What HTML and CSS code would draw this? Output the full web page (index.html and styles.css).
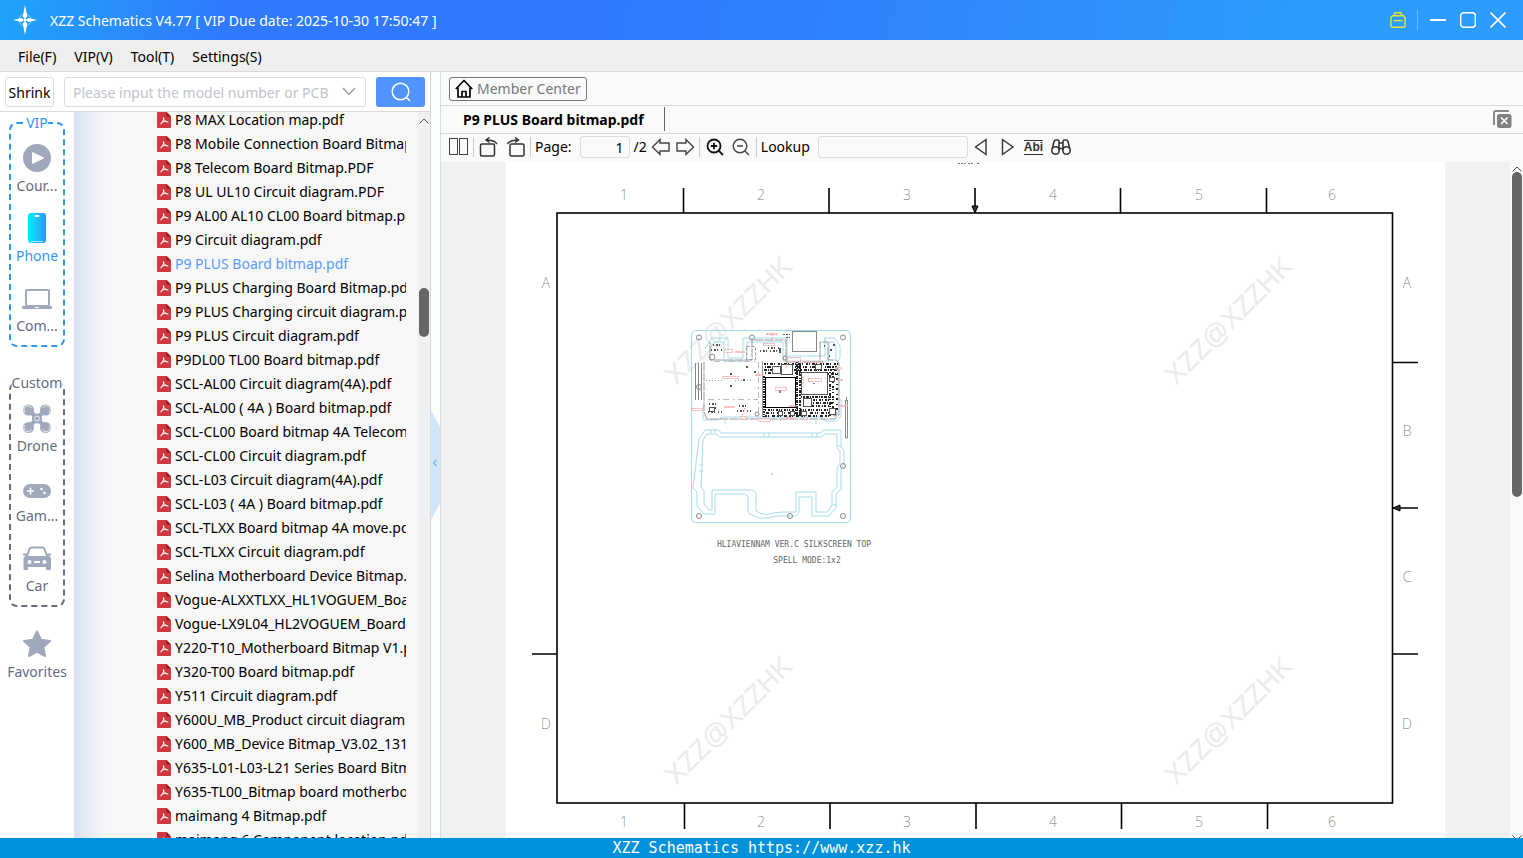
FILE: index.html
```html
<!DOCTYPE html>
<html lang="en">

<head>
    <meta charset="UTF-8">
    <meta name="viewport" content="width=device-width, initial-scale=1.0">
    <title>XZZ Schematics</title>
    <link rel="stylesheet" href="styles.css">
</head>

<body>

    <!-- shared icons -->
    <svg class="sprite" aria-hidden="true">
        <symbol id="pdf" viewBox="0 0 14 16">
            <path d="M1 0h8.500l4.500 4.500V15a1 1 0 0 1-1 1H1a1 1 0 0 1-1-1V1a1 1 0 0 1 1-1z" fill="#d0393f" />
            <path d="M9.500 0L14 4.500H9.500z" fill="#8f1218" />
            <path d="M6.300 5.500c1.300 0 .3 3-2.300 6.500M6.500 6.500c.6 2 2 3.300 4.500 3.700M4 11c2-1.500 4-2 6-1.600" fill="none" stroke="#fff" stroke-width="1" stroke-linecap="round" />
        </symbol>
    </svg>

    <header class="titlebar">
        <svg class="logo" width="24" height="30" viewBox="0 0 24 30">
            <circle cx="12" cy="15" r="6" fill="none" stroke="#8fd0ff" stroke-width="1" />
            <path d="M12 0l2.300 11.500L12 14l-2.300-2.500zM12 30l2.300-11.500L12 16l-2.300 2.500zM0 15l8.500-2 2.500 2-2.500 2zM24 15l-8.500-2-2.500 2 2.500 2z" fill="#fff" />
            <circle cx="12" cy="15" r="1.500" fill="#fff" />
        </svg>
        <h1>XZZ Schematics V4.77 [ VIP Due date: 2025-10-30 17:50:47 ]</h1>
        <div class="window-buttons">
            <button class="vip-case" aria-label="VIP">
                <svg width="16" height="16" viewBox="0 0 16 16" fill="none" stroke="#e8e23c" stroke-width="1.400">
                    <path d="M4.500 3.500V2a1.200 1.200 0 0 1 1.200-1.200h4.600A1.200 1.200 0 0 1 11.500 2v1.500" />
                    <path d="M2.500 3.700h11l1.600 2v7.800a1.800 1.800 0 0 1-1.800 1.800H2.700A1.800 1.800 0 0 1 .9 13.500V5.700z" stroke-linejoin="round" />
                    <path d="M3.500 8.600h9" />
                </svg>
            </button>
            <span class="divider"></span>
            <button aria-label="Minimize"><svg width="16" height="16" viewBox="0 0 16 16"><path d="M0 8h16" stroke="#fff" stroke-width="2" /></svg></button>
            <button aria-label="Maximize"><svg width="16" height="16" viewBox="0 0 16 16"><rect x=".7" y=".7" width="14.600" height="14.600" rx="3" fill="none" stroke="#fff" stroke-width="1.400" /></svg></button>
            <button aria-label="Close"><svg width="16" height="16" viewBox="0 0 16 16"><path d="M.5.5l15 15M15.500.5l-15 15" stroke="#fff" stroke-width="1.600" /></svg></button>
        </div>
    </header>

    <nav class="menubar">
        <button>File(F)</button>
        <button>VIP(V)</button>
        <button>Tool(T)</button>
        <button>Settings(S)</button>
    </nav>

    <main class="workspace">

        <section class="left-panel">
            <form class="search">
                <button type="button" class="shrink">Shrink</button>
                <div class="search-box">
                    <input type="text" aria-label="Model number or PCB" placeholder="Please input the model number or PCB">
                    <svg width="14" height="9" viewBox="0 0 14 9"><path d="M1 1l6 6.500L13 1" fill="none" stroke="#9a9fa8" stroke-width="1.500" /></svg>
                </div>
                <button type="button" class="search-button" aria-label="Search">
                    <svg width="20" height="20" viewBox="0 0 20 20" fill="none" stroke="#fff" stroke-width="1.500" stroke-linecap="round"><circle cx="9.500" cy="9.500" r="8.300" /><path d="M15.500 15.500l3 3" /></svg>
                </button>
            </form>

            <div class="browser">
                <aside class="sidebar">
                    <div class="group group-vip">
                        <h2>VIP</h2>
                        <button class="item">
                            <svg width="30" height="30" viewBox="0 0 30 30"><circle cx="15" cy="15" r="14" fill="#a0a8bc" /><path d="M10.500 9.500v11l11-5.500z" fill="#fff" stroke="#fff" stroke-linejoin="round" /></svg>
                            <span>Cour...</span>
                        </button>
                        <button class="item active">
                            <svg width="30" height="30" viewBox="0 0 30 30">
                                <defs><linearGradient id="phone"><stop offset="0" stop-color="#00f0ff" /><stop offset="1" stop-color="#2f96f6" /></linearGradient></defs>
                                <rect x="6" y="0" width="18" height="30" rx="3" fill="url(#phone)" />
                                <rect x="12.500" y="2" width="5" height="2" rx="1" fill="#fff" /><path d="M9 28.500h12" stroke="#9fe0ff" />
                            </svg>
                            <span>Phone</span>
                        </button>
                        <button class="item">
                            <svg width="30" height="30" viewBox="0 0 30 30"><rect x="4" y="7" width="23" height="16" rx="1" fill="none" stroke="#a0a8bc" stroke-width="2" /><path d="M0 23h30v1.500a1.500 1.500 0 0 1-1.500 1.500h-27A1.500 1.500 0 0 1 0 24.500z" fill="#a0a8bc" /><path d="M13 24.500h4" stroke="#fff" /></svg>
                            <span>Com...</span>
                        </button>
                    </div>

                    <div class="group group-custom">
                        <h2>Custom</h2>
                        <button class="item">
                            <svg width="30" height="30" viewBox="0 0 30 30">
                                <path d="M6 6l18 19M24 6L6 25" stroke="#a0a8bc" stroke-width="4" />
                                <g fill="#a0a8bc"><circle cx="6.500" cy="7" r="5.500" /><circle cx="23.500" cy="7" r="5.500" /><circle cx="6.500" cy="24.500" r="5.500" /><circle cx="23.500" cy="24.500" r="5.500" /><circle cx="15" cy="15.500" r="5" /></g>
                                <g fill="none" stroke="#fff" stroke-width=".8"><path d="M3 9.500A4 4 0 1 1 9.500 5M20.500 5A4 4 0 1 1 27 9.500M3 22a4 4 0 1 0 6.500 4.500M20.500 26.500A4 4 0 1 0 27 22" /><circle cx="15" cy="15.500" r="2.500" /></g>
                            </svg>
                            <span>Drone</span>
                        </button>
                        <button class="item">
                            <svg width="30" height="30" viewBox="0 0 30 30"><rect x="1" y="11" width="28" height="14" rx="7" fill="#a0a8bc" /><path d="M5 18h7M8.500 14.500v7" stroke="#fff" stroke-width="1.600" /><circle cx="19.500" cy="16" r="1.300" fill="#fff" /><circle cx="22.500" cy="20" r="1.300" fill="#fff" /></svg>
                            <span>Gam...</span>
                        </button>
                        <button class="item">
                            <svg width="30" height="30" viewBox="0 0 30 30"><path d="M5 13l2.500-7q.6-1.500 2-1.500h11q1.400 0 2 1.500l2.500 7" fill="none" stroke="#a0a8bc" stroke-width="2" /><path d="M1 10.500h4v2.500h20v-2.500h4v2h-2q2 2 2 4V26a1 1 0 0 1-1 1h-3a1 1 0 0 1-1-1v-2H6v2a1 1 0 0 1-1 1H2.500a1 1 0 0 1-1-1v-9.500q0-2 2-4H1z" fill="#a0a8bc" /><circle cx="7.500" cy="19" r="2" fill="#fff" /><circle cx="22.500" cy="19" r="2" fill="#fff" /><path d="M12 19h6" stroke="#fff" stroke-width="2" /></svg>
                            <span>Car</span>
                        </button>
                    </div>

                    <button class="item favorites">
                        <svg width="30" height="30" viewBox="0 0 30 30"><path d="M15 2.500l4 8.200 9 1.200-6.600 6.200L23 27l-8-4.300L7 27l1.600-8.900L2 11.900l9-1.200z" fill="#a0a8bc" stroke="#a0a8bc" stroke-width="2" stroke-linejoin="round" /></svg>
                        <span>Favorites</span>
                    </button>
                </aside>

                <div class="tree">
                    <ul class="files">
                        <li><a href="#"><svg><use href="#pdf" /></svg>P8 MAX Location map.pdf</a></li>
                        <li><a href="#"><svg><use href="#pdf" /></svg>P8 Mobile Connection Board Bitmap.pdf</a></li>
                        <li><a href="#"><svg><use href="#pdf" /></svg>P8 Telecom Board Bitmap.PDF</a></li>
                        <li><a href="#"><svg><use href="#pdf" /></svg>P8 UL UL10 Circuit diagram.PDF</a></li>
                        <li><a href="#"><svg><use href="#pdf" /></svg>P9 AL00 AL10 CL00 Board bitmap.pdf</a></li>
                        <li><a href="#"><svg><use href="#pdf" /></svg>P9 Circuit diagram.pdf</a></li>
                        <li><a href="#" class="selected"><svg><use href="#pdf" /></svg>P9 PLUS Board bitmap.pdf</a></li>
                        <li><a href="#"><svg><use href="#pdf" /></svg>P9 PLUS Charging Board Bitmap.pdf</a></li>
                        <li><a href="#"><svg><use href="#pdf" /></svg>P9 PLUS Charging circuit diagram.pdf</a></li>
                        <li><a href="#"><svg><use href="#pdf" /></svg>P9 PLUS Circuit diagram.pdf</a></li>
                        <li><a href="#"><svg><use href="#pdf" /></svg>P9DL00 TL00 Board bitmap.pdf</a></li>
                        <li><a href="#"><svg><use href="#pdf" /></svg>SCL-AL00 Circuit diagram(4A).pdf</a></li>
                        <li><a href="#"><svg><use href="#pdf" /></svg>SCL-AL00 ( 4A ) Board bitmap.pdf</a></li>
                        <li><a href="#"><svg><use href="#pdf" /></svg>SCL-CL00 Board bitmap 4A Telecom.pdf</a></li>
                        <li><a href="#"><svg><use href="#pdf" /></svg>SCL-CL00 Circuit diagram.pdf</a></li>
                        <li><a href="#"><svg><use href="#pdf" /></svg>SCL-L03 Circuit diagram(4A).pdf</a></li>
                        <li><a href="#"><svg><use href="#pdf" /></svg>SCL-L03 ( 4A ) Board bitmap.pdf</a></li>
                        <li><a href="#"><svg><use href="#pdf" /></svg>SCL-TLXX Board bitmap 4A move.pdf</a></li>
                        <li><a href="#"><svg><use href="#pdf" /></svg>SCL-TLXX Circuit diagram.pdf</a></li>
                        <li><a href="#"><svg><use href="#pdf" /></svg>Selina Motherboard Device Bitmap.pdf</a></li>
                        <li><a href="#"><svg><use href="#pdf" /></svg>Vogue-ALXXTLXX_HL1VOGUEM_Board.pdf</a></li>
                        <li><a href="#"><svg><use href="#pdf" /></svg>Vogue-LX9L04_HL2VOGUEM_Board.pdf</a></li>
                        <li><a href="#"><svg><use href="#pdf" /></svg>Y220-T10_Motherboard Bitmap V1.pdf</a></li>
                        <li><a href="#"><svg><use href="#pdf" /></svg>Y320-T00 Board bitmap.pdf</a></li>
                        <li><a href="#"><svg><use href="#pdf" /></svg>Y511 Circuit diagram.pdf</a></li>
                        <li><a href="#"><svg><use href="#pdf" /></svg>Y600U_MB_Product circuit diagram.pdf</a></li>
                        <li><a href="#"><svg><use href="#pdf" /></svg>Y600_MB_Device Bitmap_V3.02_131.pdf</a></li>
                        <li><a href="#"><svg><use href="#pdf" /></svg>Y635-L01-L03-L21 Series Board Bitmap.pdf</a></li>
                        <li><a href="#"><svg><use href="#pdf" /></svg>Y635-TL00_Bitmap board motherboard.pdf</a></li>
                        <li><a href="#"><svg><use href="#pdf" /></svg>maimang 4 Bitmap.pdf</a></li>
                        <li><a href="#"><svg><use href="#pdf" /></svg>maimang 6 Component location.pdf</a></li>
                    </ul>
                    <div class="scrollbar tree-scroll">
                        <svg width="10" height="6" viewBox="0 0 10 6"><path d="M.5 5.500L5 1l4.500 4.500" fill="none" stroke="#555" /></svg>
                        <div class="thumb"></div>
                    </div>
                </div>
            </div>
        </section>

        <div class="splitter">
            <button class="collapse" aria-label="Collapse panel">
                <svg width="9" height="110" viewBox="0 0 9 110"><path d="M0 0l9 17v76L0 110z" fill="#cfe6fb" /><path d="M5.500 50l-3 3 3 3" fill="none" stroke="#3b8fe8" /></svg>
            </button>
        </div>

        <section class="right-panel">
            <div class="member-bar">
                <button class="member">
                    <svg width="18" height="19" viewBox="0 0 18 19" fill="none" stroke="#000" stroke-width="1.700" stroke-linejoin="round"><path d="M.8 10L9 1.500 17.200 10M3 8.500V18h12V8.500M7 18v-5.500h4V18" /></svg>
                    Member Center
                </button>
            </div>

            <div class="tabs">
                <button class="tab">P9 PLUS Board bitmap.pdf</button>
                <button class="close-all" aria-label="Close all tabs">
                    <svg width="19" height="18" viewBox="0 0 19 18"><path d="M1 15V3a2 2 0 0 1 2-2h13" fill="none" stroke="#8a8a8a" stroke-width="2" /><rect x="4" y="4" width="14.500" height="14" rx="2.500" fill="#808080" /><path d="M8 7.500l6.500 6.500M14.500 7.500L8 14" stroke="#fff" stroke-width="1.700" /></svg>
                </button>
            </div>

            <div class="toolbar">
                <button aria-label="Two pages"><svg width="20" height="18" viewBox="0 0 20 18" fill="none" stroke="#444"><rect x=".5" y=".5" width="8" height="16" /><rect x="10.500" y=".5" width="8" height="16" /></svg></button>
                <span class="sep"></span>
                <div class="rotate">
                    <button aria-label="Rotate left"><svg width="20" height="20" viewBox="0 0 20 20" fill="none" stroke="#333" stroke-width="1.500"><rect x="2.500" y="7" width="14" height="12" rx="1.500" /><path d="M19 7Q16.500 3 8.500 3M11.500.5L8 3l3.500 2.500" /></svg></button>
                    <button aria-label="Rotate right"><svg width="20" height="20" viewBox="0 0 20 20" fill="none" stroke="#333" stroke-width="1.500"><rect x="4" y="7" width="14" height="12" rx="1.500" /><path d="M1.500 7Q4 3 12 3M9 .5L12.500 3 9 5.500" /></svg></button>
                </div>
                <span class="sep"></span>
                <label for="page">Page:</label>
                <input type="text" id="page" class="page-input" value="1">
                <span>/2</span>
                <button aria-label="Previous page"><svg width="20" height="18" viewBox="0 0 20 18" fill="none" stroke="#444" stroke-width="1.400"><path d="M1.500 9l7.500-7.500V5h9v8H9v3.500z" /></svg></button>
                <button aria-label="Next page"><svg width="20" height="18" viewBox="0 0 20 18" fill="none" stroke="#444" stroke-width="1.400"><path d="M18.500 9L11 1.500V5H2v8h9v3.500z" /></svg></button>
                <span class="sep"></span>
                <div class="zoom">
                    <button aria-label="Zoom in"><svg width="18" height="18" viewBox="0 0 18 18" fill="none" stroke="#111" stroke-width="1.800"><circle cx="8" cy="8" r="6.500" /><path d="M12.700 12.700L17 17M4.800 8h6.400M8 4.800v6.400" /></svg></button>
                    <button aria-label="Zoom out"><svg width="18" height="18" viewBox="0 0 18 18" fill="none" stroke="#444" stroke-width="1.400"><circle cx="8" cy="8" r="6.800" /><path d="M12.700 12.700L17 17M5 8h6" /></svg></button>
                </div>
                <span class="sep"></span>
                <label for="lookup">Lookup</label>
                <input type="text" id="lookup" class="lookup-input">
                <div class="find">
                    <button aria-label="Find previous"><svg width="18" height="18" viewBox="0 0 18 18" fill="none" stroke="#333" stroke-width="1.400"><path d="M14 1.500v15L3.500 9z" /></svg></button>
                    <button aria-label="Find next"><svg width="18" height="18" viewBox="0 0 18 18" fill="none" stroke="#333" stroke-width="1.400"><path d="M4.500 1.500v15L15 9z" /></svg></button>
                    <button class="whole-word">Abi</button>
                    <button aria-label="Find"><svg width="20" height="16" viewBox="0 0 20 16" fill="none" stroke="#333" stroke-width="1.600"><circle cx="4.500" cy="11.500" r="3.700" /><circle cx="15.500" cy="11.500" r="3.700" /><path d="M1.200 10L3 2.500Q3.500 1 5 1h1.500Q8 1 8 2.500V11M18.800 10L17 2.500Q16.500 1 15 1h-1.500Q12 1 12 2.500V11M8 4h4M8 9.500h4" /></svg></button>
                </div>
            </div>

            <div class="viewer">
                <div class="canvas">
                    <svg class="page" width="939" height="676" viewBox="506 162 939 676">
                        <path d="M958 163.500h8m2 0h6m3 0h3" stroke="#777" stroke-dasharray="2 1" />

                        <g class="watermark">
                            <text transform="translate(735 327) rotate(-45)">XZZ@XZZHK</text>
                            <text transform="translate(1235 327) rotate(-45)">XZZ@XZZHK</text>
                            <text transform="translate(735 727) rotate(-45)">XZZ@XZZHK</text>
                            <text transform="translate(1235 727) rotate(-45)">XZZ@XZZHK</text>
                        </g>

                        <!-- sheet frame -->
                        <g fill="none" stroke="#000" stroke-width="1.600">
                            <rect x="557" y="213" width="835.500" height="590" />
                            <path d="M683.500 188v25M829 188v25M975 188v25M1120.500 188v25M1266.500 188v25" />
                            <path d="M684.500 803v26M830 803v26M976 803v26M1121.500 803v26M1267.500 803v26" />
                            <path d="M1393 362.500h25M1393 508h25M1393 654h25M532 654h25" />
                        </g>
                        <path d="M972 206h6l-3 7zM1400 505v6l-7-3z" fill="#333" stroke="#000" />

                        <g class="zone">
                            <text x="624" y="200">1</text><text x="761" y="200">2</text><text x="907" y="200">3</text>
                            <text x="1053" y="200">4</text><text x="1199" y="200">5</text><text x="1332" y="200">6</text>
                            <text x="624" y="827">1</text><text x="761" y="827">2</text><text x="907" y="827">3</text>
                            <text x="1053" y="827">4</text><text x="1199" y="827">5</text><text x="1332" y="827">6</text>
                            <text x="546" y="288">A</text><text x="546" y="729">D</text>
                            <text x="1407" y="288">A</text><text x="1407" y="436">B</text><text x="1407" y="582">C</text><text x="1407" y="729">D</text>
                        </g>

                        <!-- panel outline and routing -->
                        <g fill="none" stroke="#a5dcec">
                            <rect x="691.500" y="330.500" width="159" height="192" rx="4" />
                            <path d="M705 349l7-11h16v20h15v-20h44v18h38v-18h10l5 8v12l-2 3v35l3 4v16l-4 5h-12l-4-4h-99l-4 3h-15v-14" />
                            <path d="M709 351l5-9h10v19h23v-19h36v19h46v-19h5l2 5v12" />
                            <path d="M699 439l6-9h13l4 3h98l4-3h17v16l3 5v13l-3 5v20l-5 5v14l-7 8h-17v-19h-13v15l-3 4h-21l-7 2h-8l-8-3q-4-1-4-5v-14l-4-2h-29v20h-11l-7-8v-14l-4-4z" />
                            <path d="M703 440l4-6h9l4 3h101l4-3h12v13l3 5v11l-3 5v19l-5 5v13l-5 7h-11v-20h-20v20h-14l-8 1q-8 3-14 0l-4-2v-18l-3-3h-41v20h-3l-5-6v-13l-3-4z" />
                            <path d="M699 465h4M699 471h4M711 429v4M715 429v4M764 433v4M769 433v4M812 433v4M817 433v4M838 446h4M832 505h4M720 341v-4M787 341v-4M825 341v-4M725 420v4M816 420v4" />
                        </g>

                        <!-- fiducials -->
                        <g fill="none" stroke="#888">
                            <circle cx="699" cy="337.500" r="2.500" /><circle cx="843" cy="337.500" r="2.500" /><circle cx="752" cy="337.500" r="2.500" />
                            <circle cx="699" cy="387" r="2.500" /><circle cx="843" cy="466" r="2.500" /><circle cx="790" cy="516" r="2.500" />
                            <circle cx="699" cy="516" r="2.500" /><circle cx="843" cy="516" r="2.500" />
                            <circle cx="785" cy="358" r="2" /><circle cx="757" cy="414" r="2" /><circle cx="835" cy="414" r="2" /><circle cx="712" cy="357" r="3" />
                            <rect x="792.500" y="331.500" width="24" height="20" />
                            <path d="M695.500 363v37M698.500 363v37M701.500 363v37M845.500 400v38M847.500 400v38M845.500 438h2M846.500 397v4" />
                        </g>

                        <!-- board -->
                        <g fill="none" stroke="#999">
                            <path d="M704 362v50l3 7h128l4-4v-52l-3-3h-8v-18h-8v20h-34V340h-34v20H710v-18" stroke-dasharray="9 1" />
                            <path d="M706 380.500h16M735 380.500h16" stroke-dasharray="1 2" />
                            <path d="M714 361.500h44M708 399.500h50M758.500 362v52" stroke="#bbb" stroke-dasharray="6 4 2 3" />
                            <rect x="746.500" y="346.500" width="9" height="13" stroke-dasharray="3 2" />
                            <path d="M762.500 361v56" />
                        </g>

                        <!-- chips with the small parts round them -->
                        <g fill="none" stroke="#222" stroke-width="2">
                            <path d="M764 364h74" stroke-dasharray="2 1 1 2 3 1 1 3" />
                            <path d="M765 367h72" stroke-dasharray="1 1 4 2 1 1 2 3" />
                            <path d="M764 370h73" stroke-dasharray="3 1 1 1 2 2" />
                            <path d="M765 373h35M828 374h10" stroke-dasharray="1 2 3 1 1 1" />
                            <path d="M764 376v41" stroke-dasharray="2 1 1 1" />
                            <path d="M797 362v55" stroke-dasharray="1 1 3 1" />
                            <path d="M800 364v52" stroke-dasharray="2 2 1 1 3 1" />
                            <path d="M830 372v45" stroke-dasharray="1 2 3 1 1 1" />
                            <path d="M833 366v48" stroke-dasharray="2 1 1 2 1 3" />
                            <path d="M837 368v44" stroke-dasharray="2 4 1 3" />
                            <path d="M765 410h70" stroke-dasharray="1 2 2 1 1 1" />
                            <path d="M766 413h68" stroke-dasharray="3 2 1 1 1 3" />
                            <path d="M765 416h66" stroke-dasharray="2 1 1 3 3 2" />
                            <path d="M801 397h30" stroke-dasharray="1 1 2 1 3 1" />
                            <path d="M813 400h18" stroke-dasharray="2 1 1 2" />
                            <path d="M813 403h20" stroke-dasharray="1 2 3 1" />
                            <path d="M812 406h18" stroke-dasharray="2 2 1 1" />
                        </g>
                        <g fill="none" stroke="#555" stroke-width="2">
                            <path d="M760 351h20M708 412h14M709 408h10M737 411h14M739 406h10M711 350h12M713 345h8M768 348h12M709 404h8" stroke-dasharray="1 2 2 1 1 3" />
                            <path d="M783 334.500h7M786 337.500h4" stroke-width="1" stroke-dasharray="2 1" />
                            <path d="M731 373v2M730 386h2M743 380h2M746 367h2M755 371v2M780 348v5M833 345h2M830 350h2M824 346h1M829 356h1" />
                        </g>
                        <g fill="#fff" stroke="#555">
                            <rect x="765.500" y="377.500" width="30" height="30" stroke="#000" />
                            <rect x="801.500" y="372.500" width="26" height="22" />
                            <rect x="781.500" y="364.500" width="11" height="10" /><rect x="772.500" y="366.500" width="8" height="7" />
                            <rect x="803.500" y="398.500" width="8" height="8" /><rect x="829.500" y="408.500" width="6" height="6" />
                            <rect x="815.500" y="364.500" width="6" height="5" /><rect x="801.500" y="411.500" width="5" height="4" />
                            <rect x="709.500" y="407.500" width="5" height="4" /><rect x="829.500" y="377.500" width="5" height="4" />
                            <rect x="778.500" y="411.500" width="4" height="4" /><rect x="790.500" y="411.500" width="4" height="4" />
                        </g>
                        <path d="M780 390v3M814 383v1" stroke="#000" />

                        <!-- part names -->
                        <g fill="#fff" fill-opacity=".6" stroke="#f5a3a3" stroke-dasharray="2 1">
                            <rect x="722.500" y="376.500" width="16" height="2" /><rect x="724.500" y="349.500" width="8" height="3" />
                            <rect x="735.500" y="351.500" width="9" height="1" /><rect x="763.500" y="343.500" width="11" height="2" />
                            <rect x="766.500" y="333.500" width="11" height="1" /><rect x="775.500" y="387.500" width="11" height="3" />
                            <rect x="808.500" y="378.500" width="13" height="3" /><rect x="787.500" y="357.500" width="13" height="4" />
                            <rect x="803.500" y="361.500" width="20" height="1" /><rect x="691.500" y="408.500" width="11" height="2" />
                            <rect x="724.500" y="406.500" width="10" height="1" /><rect x="740.500" y="416.500" width="6" height="3" />
                            <rect x="758.500" y="418.500" width="12" height="3" /><rect x="789.500" y="405.500" width="7" height="1" />
                            <rect x="786.500" y="417.500" width="7" height="1" /><rect x="803.500" y="417.500" width="4" height="2" />
                            <rect x="835.500" y="367.500" width="6" height="2" /><rect x="837.500" y="379.500" width="5" height="1" />
                            <rect x="838.500" y="405.500" width="9" height="1" /><rect x="755.500" y="374.500" width="8" height="1" />
                            <path d="M803 376v8M772 334v8M788 361l-3 8M745 408l-3 8M771 474h2" />
                        </g>

                        <g class="caption">
                            <text x="794" y="547">HLIAVIENNAM VER.C SILKSCREEN TOP</text>
                            <text x="807" y="563">SPELL MODE:1x2</text>
                        </g>
                    </svg>
                </div>
                <div class="scrollbar page-scroll">
                    <svg width="10" height="6" viewBox="0 0 10 6"><path d="M.5 5.500L5 1l4.500 4.500" fill="none" stroke="#444" /></svg>
                    <div class="thumb"></div>
                    <svg class="down" width="10" height="6" viewBox="0 0 10 6"><path d="M.5 3.500L5 8l4.500-4.500" fill="none" stroke="#444" /></svg>
                </div>
            </div>
        </section>
    </main>

    <footer class="statusbar">XZZ Schematics https://www.xzz.hk</footer>

</body>

</html>
```
FILE: styles.css
```css
* {
    box-sizing: border-box;
}

body {
    margin: 0;
    height: 100vh;
    display: flex;
    flex-direction: column;
    overflow: hidden;
    font-family: "Noto Sans", "Open Sans", sans-serif;
    font-size: 14px;
    line-height: 20px;
    color: #000;
    background-color: #fff;
}

button,
input {
    font: inherit;
    color: inherit;
}

button {
    padding: 0;
    border: none;
    background: none;
    cursor: pointer;
}

svg {
    display: block;
    flex: none;
}

.sprite {
    position: absolute;
    width: 0;
    height: 0;
}

/* title bar */
.titlebar {
    flex: none;
    display: flex;
    align-items: center;
    height: 40px;
    padding: 0 17px 0 13px;
    color: #fff;
    background: linear-gradient(100deg, #1fa4fb 0%, #3079fd 15%, #3078fe 38%, #2e86fe 60%, #2c9bfe 85%, #2c9dfd 100%);
}

.titlebar h1 {
    flex: 1;
    margin: 0 0 0 13px;
    padding-top: 2px;
    font-size: 14px;
    font-weight: 400;
}

.window-buttons {
    display: flex;
    align-items: center;
    gap: 14px;
}

.window-buttons .divider {
    width: 1px;
    height: 20px;
    margin: 0 -2px 0 -3px;
    background-color: #6cbcff;
}

/* menu */
.menubar {
    flex: none;
    display: flex;
    gap: 18px;
    height: 32px;
    padding: 2px 18px 0;
    background-color: #efefef;
    border-bottom: 1px solid #dadada;
}

.workspace {
    flex: 1;
    display: flex;
    min-height: 0;
}

/* left side */
.left-panel {
    flex: none;
    width: 431px;
    display: flex;
    flex-direction: column;
    border-right: 1px solid #d8d8d8;
}

.search {
    flex: none;
    display: flex;
    align-items: center;
    height: 40px;
    padding: 0 5px;
    gap: 10px;
    border-bottom: 1px solid #dadada;
}

.shrink {
    width: 49px;
    height: 30px;
    padding-top: 2px;
    border: 1px solid #dcdcdc;
    border-radius: 3px;
}

.search-box {
    flex: 1;
    display: flex;
    align-items: center;
    height: 30px;
    padding: 0 9px 0 8px;
    border: 1px solid #dcdcdc;
    border-radius: 3px;
}

.search-box input {
    flex: 1;
    min-width: 0;
    padding: 2px 0 0;
    border: none;
    outline: none;
    background: none;
}

.search-box input::placeholder {
    color: #c0c4cc;
}

.search-button {
    display: flex;
    align-items: center;
    justify-content: center;
    width: 49px;
    height: 30px;
    border-radius: 3px;
    background-color: #4f94ff;
}

.browser {
    flex: 1;
    display: flex;
    min-height: 0;
}

.sidebar {
    flex: none;
    width: 74px;
    padding: 10px 9px 0;
    overflow: hidden;
    color: #646c80;
}

.group {
    position: relative;
    height: 225px;
    margin-bottom: 35px;
    padding-top: 19px;
    border: 2px dashed #656c7e;
    border-radius: 8px;
}

.group-vip {
    border-color: #3098f3;
}

.group h2 {
    position: absolute;
    top: -11px;
    left: 50%;
    transform: translateX(-50%);
    margin: 0;
    font-size: 14px;
    font-weight: 400;
    background-color: #fff;
}

.group-vip h2,
.item.active {
    color: #3098f3;
}

.item {
    display: flex;
    flex-direction: column;
    align-items: center;
    gap: 3px;
    width: 100%;
    margin-bottom: 17px;
}

.favorites {
    margin-top: -13px;
}

.tree {
    flex: 1;
    display: flex;
    min-width: 0;
    background: linear-gradient(90deg, #d8e1f1 0, #e6eaf2 12px, #f3f4f6 26px, #f7f7f7 36px);
}

.files {
    flex: 1;
    min-width: 0;
    margin: -4px 12px 0 0;
    padding: 0 0 0 83px;
    overflow: hidden;
    list-style: none;
}

.files a {
    display: flex;
    align-items: center;
    gap: 4px;
    height: 24px;
    color: #000;
    text-decoration: none;
    white-space: nowrap;
}

.files a.selected {
    color: #5a9cf8;
}

.files svg {
    width: 14px;
    height: 16px;
}

.search {
    position: relative;
    background-color: #fff;
}

.scrollbar {
    flex: none;
    display: flex;
    flex-direction: column;
    align-items: center;
    padding-top: 6px;
    background-color: #f0f0f0;
}

.scrollbar .thumb {
    width: 10px;
    border-radius: 5px;
    background-color: #666;
}

.tree-scroll {
    width: 12px;
}

.tree-scroll .thumb {
    height: 49px;
    margin-top: 164px;
}

/* splitter with collapse handle */
.splitter {
    flex: none;
    display: flex;
    align-items: center;
    width: 10px;
    background-color: #fbfffb;
    border-right: 1px solid #dadada;
}

.collapse {
    margin-top: 20px;
}

/* right side */
.right-panel {
    flex: 1;
    display: flex;
    flex-direction: column;
    min-width: 0;
    background-color: #fafafa;
}

.member-bar,
.tabs {
    flex: none;
    display: flex;
    align-items: center;
    border-bottom: 1px solid #dadada;
}

.member-bar {
    height: 34px;
    padding: 0 8px;
}

.member {
    display: flex;
    align-items: center;
    gap: 4px;
    height: 24px;
    padding: 0 5px;
    color: #777;
    border: 1px solid #777;
    border-radius: 3px;
}

.tabs {
    justify-content: space-between;
    height: 28px;
    padding: 0 11px 2px 8px;
}

.tab {
    height: 24px;
    padding: 2px 20px 0 14px;
    font-weight: 700;
    border-right: 1px solid #666;
}

.toolbar {
    flex: none;
    display: flex;
    align-items: center;
    gap: 4px;
    height: 28px;
    padding: 0 8px 2px;
}

.toolbar .sep {
    width: 1px;
    height: 20px;
    background-color: #ccc;
}

.toolbar input {
    height: 22px;
    margin-left: 4px;
    padding: 0 5px;
    border: 1px solid #dcdcdc;
    border-radius: 3px;
    background: none;
}

.toolbar .page-input {
    width: 50px;
    text-align: right;
}

.toolbar .lookup-input {
    width: 150px;
}

.rotate,
.zoom,
.find {
    display: flex;
    align-items: center;
    gap: 8px;
}

.zoom {
    padding: 0 2px;
}

.whole-word {
    height: 15px;
    font-family: "Liberation Sans", Arial, sans-serif;
    font-size: 12px;
    font-weight: 700;
    line-height: 13px;
    color: #333;
    border-top: 1px solid #333;
    border-bottom: 1px solid #333;
}

.viewer {
    flex: 1;
    display: flex;
    min-height: 0;
}

.canvas {
    flex: 1;
    display: flex;
    justify-content: center;
    min-width: 0;
    overflow: hidden;
    background-color: #f1f1f1;
}

.page {
    background-color: #fff;
}

.page-scroll {
    width: 13px;
    padding-top: 4px;
    background-color: #fafafa;
}

.page-scroll .thumb {
    height: 325px;
}

.page-scroll .down {
    margin-top: auto;
}

/* drawing sheet texts */
.watermark {
    font-family: "Liberation Sans", Arial, sans-serif;
    font-size: 27px;
    text-anchor: middle;
    fill: #ebebeb;
}

.zone {
    font-family: "Noto Sans", sans-serif;
    font-size: 14px;
    font-weight: 200;
    text-anchor: middle;
    fill: #777;
}

.caption {
    font-family: "DejaVu Sans Mono", monospace;
    font-size: 8px;
    text-anchor: middle;
    fill: #666;
}

.statusbar {
    flex: none;
    height: 20px;
    font-family: "DejaVu Sans Mono", monospace;
    font-size: 15px;
    line-height: 21px;
    text-align: center;
    color: #fff;
    background-color: #0091da;
}
```
